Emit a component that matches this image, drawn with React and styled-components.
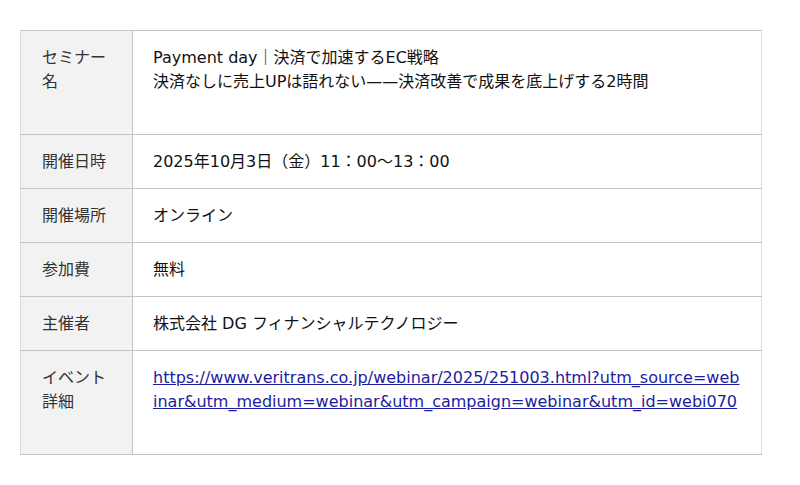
import styled, { createGlobalStyle } from "styled-components";

const GlobalStyle = createGlobalStyle`
  body {
    margin: 0;
    background: #fff;
    font-family: "DejaVu Sans", "Noto Sans CJK JP", sans-serif;
    color: #111;
  }
`;

const rows = [
  {
    label: ["セミナー", "名"],
    value: [
      "Payment day｜決済で加速するEC戦略",
      "決済なしに売上UPは語れない——決済改善で成果を底上げする2時間",
    ],
    tall: true,
  },
  { label: ["開催日時"], value: ["2025年10月3日（金）11：00〜13：00"] },
  { label: ["開催場所"], value: ["オンライン"] },
  { label: ["参加費"], value: ["無料"] },
  { label: ["主催者"], value: ["株式会社 DG フィナンシャルテクノロジー"] },
];

const url =
  "https://www.veritrans.co.jp/webinar/2025/251003.html?utm_source=webinar&utm_medium=webinar&utm_campaign=webinar&utm_id=webi070";

export default function App() {
  return (
    <>
      <GlobalStyle />
      <Page>
        <InfoTable>
          <tbody>
            {rows.map((row) => (
              <tr key={row.label.join("")}>
                <Label tall={row.tall}>
                  {row.label.map((l) => (
                    <Line key={l}>{l}</Line>
                  ))}
                </Label>
                <Value tall={row.tall}>
                  {row.value.map((v) => (
                    <Line key={v}>{v}</Line>
                  ))}
                </Value>
              </tr>
            ))}
            <tr>
              <Label tall>
                <Line>イベント</Line>
                <Line>詳細</Line>
              </Label>
              <Value tall>
                <Link href={url}>
                  https://www.veritrans.co.jp/webinar/2025/251003.html?utm_source=web
                  <br />
                  inar&amp;utm_medium=webinar&amp;utm_campaign=webinar&amp;utm_id=webi070
                </Link>
              </Value>
            </tr>
          </tbody>
        </InfoTable>
      </Page>
    </>
  );
}

//style
const Page = styled.div`
  padding: 30px 20px;
`;

const InfoTable = styled.table`
  width: 742px;
  border-collapse: collapse;
  border: 1px solid #ddd;
  font-size: 16px;
  line-height: 24px;
`;

const Cell = styled.td`
  border-top: 1px solid #c4c4c4;
  border-bottom: 1px solid #c4c4c4;
  padding: 15px 10px ${({ tall }) => (tall ? "40px" : "14px")} 20px;
  vertical-align: top;
  text-align: left;
`;

const Label = styled(Cell)`
  width: 80px;
  padding-left: 21px;
  background: #f2f2f2;
  border-right: 1px solid #c4c4c4;
  color: #333;
`;

const Value = styled(Cell)`
  color: #111;
`;

const Line = styled.div`
  white-space: nowrap;
`;

const Link = styled.a`
  color: #1c1c9e;
  text-decoration: underline;
  white-space: nowrap;
`;
